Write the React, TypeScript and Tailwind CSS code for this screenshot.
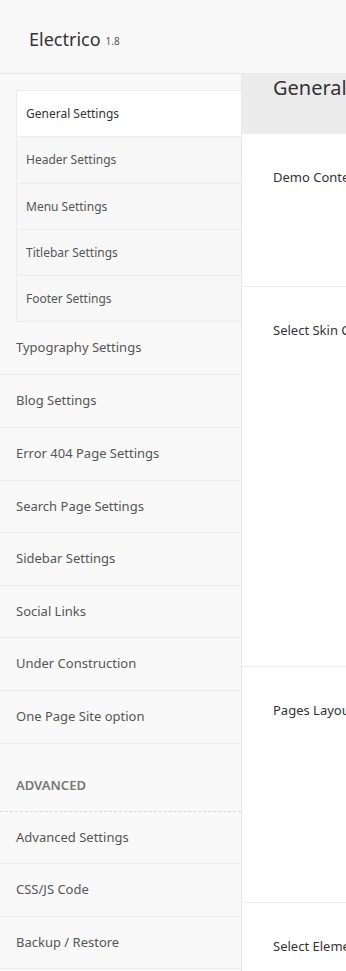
import React from "react";

const sub = [
  { label: "General Settings", active: true, h: "h-[46px]" },
  { label: "Header Settings", h: "h-[47px]" },
  { label: "Menu Settings", h: "h-[46px]" },
  { label: "Titlebar Settings", h: "h-[46px]" },
  { label: "Footer Settings", h: "h-[46px]" },
];

const main = [
  { label: "Typography Settings", h: "h-[53px]" },
  { label: "Blog Settings", h: "h-[53px]" },
  { label: "Error 404 Page Settings", h: "h-[53px]" },
  { label: "Search Page Settings", h: "h-[52px]" },
  { label: "Sidebar Settings", h: "h-[53px]" },
  { label: "Social Links", h: "h-[52px]" },
  { label: "Under Construction", h: "h-[53px]" },
  { label: "One Page Site option", h: "h-[53px]" },
];

const adv = [
  { label: "Advanced Settings", h: "h-[52px]" },
  { label: "CSS/JS Code", h: "h-[53px]" },
  { label: "Backup / Restore", h: "h-[52px]" },
];

const sections = [
  { label: "Demo Content", h: "h-[153px]", pt: "pt-[34px]" },
  { label: "Select Skin Color", h: "h-[380px]", pt: "pt-[34px]" },
  { label: "Pages Layout", h: "h-[236px]", pt: "pt-[34px]" },
  { label: "Select Element", h: "h-[120px]", pt: "pt-[34px]" },
];

export default function App() {
  return (
    <div
      className="w-[346px] h-[971px] overflow-hidden bg-[#f9f9f9] text-[#444]"
      style={{ fontFamily: '"Noto Sans", "Open Sans", sans-serif' }}
    >
      <div className="h-[74px] border-b border-[#e6e6e6] flex items-center pl-[29px] pt-[5px]">
        <span className="text-[18px] text-[#333] leading-none">Electrico</span>
        <span className="text-[10px] text-[#555] ml-[5px] mt-[4px] leading-none">1.8</span>
      </div>
      <div className="flex">
        <div className="w-[242px] shrink-0 border-r border-[#e8e8e8] bg-[#f9f9f9] pt-[16px]">
          <div className="ml-[16px] border-l border-t border-[#ececec]">
            {sub.map((s) => (
              <div
                key={s.label}
                className={`${s.h} border-b border-[#ececec] flex items-center pl-[9px] text-[12px] ${
                  s.active ? "bg-white text-[#333]" : "bg-[#f7f7f7] text-[#555]"
                }`}
              >
                {s.label}
              </div>
            ))}
          </div>
          {main.map((s) => (
            <div
              key={s.label}
              className={`${s.h} border-b border-[#ececec] flex items-center pl-[16px] text-[13px] text-[#555]`}
            >
              {s.label}
            </div>
          ))}
          <div className="h-[68px] border-b border-dashed border-[#d8d8d8] flex items-center pl-[16px] pt-[16px] text-[13px] font-semibold text-[#777]">
            ADVANCED
          </div>
          {adv.map((s) => (
            <div
              key={s.label}
              className={`${s.h} border-b border-[#ececec] flex items-center pl-[16px] text-[13px] text-[#555]`}
            >
              {s.label}
            </div>
          ))}
        </div>
        <div className="flex-1 min-w-0 bg-white overflow-hidden">
          <div className="h-[60px] bg-[#ececec] pl-[31px] text-[20px] leading-[27px] text-[#333] whitespace-nowrap">
            General Settings
          </div>
          {sections.map((s) => (
            <div
              key={s.label}
              className={`${s.h} ${s.pt} border-b border-[#ececec] pl-[31px] text-[13px] text-[#333] whitespace-nowrap`}
            >
              {s.label}
            </div>
          ))}
        </div>
      </div>
    </div>
  );
}
